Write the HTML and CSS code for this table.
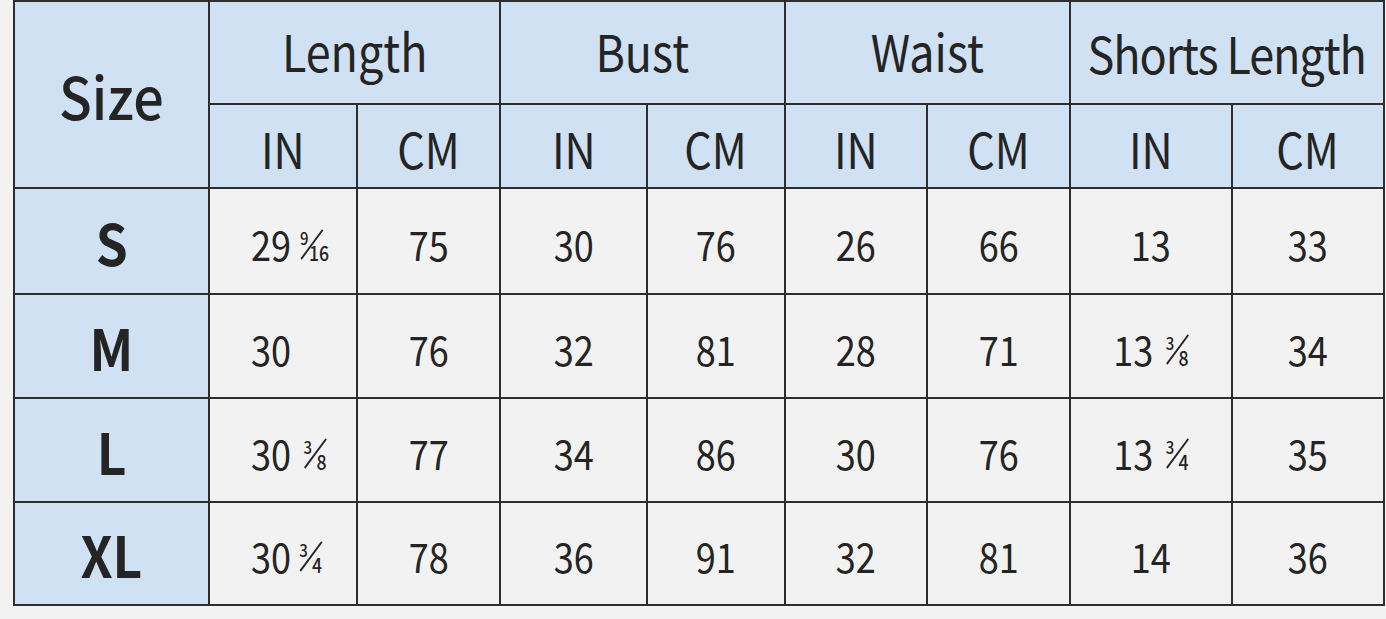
FILE: index.html
```html
<!DOCTYPE html>
<html>
<head>
<meta charset="utf-8">
<link rel="stylesheet" href="styles.css">
</head>
<body>
<table class="chart">
  <colgroup>
    <col class="c-size"><col class="c1"><col class="c2"><col class="c3"><col class="c4"><col class="c5"><col class="c6"><col class="c7"><col class="c8">
  </colgroup>
  <thead>
    <tr class="h1">
      <th rowspan="2" class="size-h"><span class="t">Size</span></th>
      <th colspan="2"><span class="t">Length</span></th>
      <th colspan="2"><span class="t">Bust</span></th>
      <th colspan="2"><span class="t">Waist</span></th>
      <th colspan="2" class="shorts"><span class="t">Shorts Length</span></th>
    </tr>
    <tr class="h2">
      <th><span class="t">IN</span></th><th><span class="t">CM</span></th>
      <th><span class="t">IN</span></th><th><span class="t">CM</span></th>
      <th><span class="t">IN</span></th><th><span class="t">CM</span></th>
      <th><span class="t">IN</span></th><th><span class="t">CM</span></th>
    </tr>
  </thead>
  <tbody>
    <tr class="r1">
      <th class="sz"><span class="t">S</span></th>
      <td class="left"><span class="t">29 <span class="frac wide"><span class="n">9</span><span class="s"></span><span class="d">16</span></span></span></td>
      <td><span class="t">75</span></td><td><span class="t">30</span></td><td><span class="t">76</span></td>
      <td><span class="t">26</span></td><td><span class="t">66</span></td><td><span class="t">13</span></td><td><span class="t">33</span></td>
    </tr>
    <tr class="r2">
      <th class="sz"><span class="t">M</span></th>
      <td class="left"><span class="t">30</span></td>
      <td><span class="t">76</span></td><td><span class="t">32</span></td><td><span class="t">81</span></td>
      <td><span class="t">28</span></td><td><span class="t">71</span></td>
      <td><span class="t">13 <span class="frac"><span class="n">3</span><span class="s"></span><span class="d">8</span></span></span></td>
      <td><span class="t">34</span></td>
    </tr>
    <tr class="r3">
      <th class="sz"><span class="t">L</span></th>
      <td class="left"><span class="t">30 <span class="frac"><span class="n">3</span><span class="s"></span><span class="d">8</span></span></span></td>
      <td><span class="t">77</span></td><td><span class="t">34</span></td><td><span class="t">86</span></td>
      <td><span class="t">30</span></td><td><span class="t">76</span></td>
      <td><span class="t">13 <span class="frac"><span class="n">3</span><span class="s"></span><span class="d">4</span></span></span></td>
      <td><span class="t">35</span></td>
    </tr>
    <tr class="r4">
      <th class="sz"><span class="t">XL</span></th>
      <td class="left"><span class="t">30 <span class="frac tight"><span class="n">3</span><span class="s"></span><span class="d">4</span></span></span></td>
      <td><span class="t">78</span></td><td><span class="t">36</span></td><td><span class="t">91</span></td>
      <td><span class="t">32</span></td><td><span class="t">81</span></td><td><span class="t">14</span></td><td><span class="t">36</span></td>
    </tr>
  </tbody>
</table>
</body>
</html>
```
FILE: styles.css
```css
html, body {
  margin: 0;
  padding: 0;
  background: #f2f2f2;
}
body {
  padding: 0 0 0 13px;
  font-family: "Noto Sans CJK SC", "Noto Sans", sans-serif;
  color: #242424;
}
.chart {
  border-collapse: collapse;
  table-layout: fixed;
  width: 1370px;
  border: 2px solid #2e2e2e;
}
.c-size { width: 195px; }
.c1 { width: 148px; }
.c2 { width: 143px; }
.c3 { width: 147px; }
.c4 { width: 138px; }
.c5 { width: 142px; }
.c6 { width: 143px; }
.c7 { width: 162px; }
.c8 { width: 152px; }
.chart th, .chart td {
  border: 2px solid #2e2e2e;
  padding: 0;
  text-align: center;
  vertical-align: middle;
  line-height: 1;
  white-space: nowrap;
}
.t {
  display: inline-block;
  transform: scaleX(0.88);
}
.chart thead th {
  background: #cfe1f2;
  font-weight: 400;
}
.h1 { height: 103px; }
.h1 th { font-size: 51px; padding-bottom: 4px; }
.h1 th.shorts { font-size: 50px; letter-spacing: -1.2px; padding-bottom: 2px; }
.h1 th.shorts .t { transform: scaleX(0.9); }
.h1 th.size-h { font-size: 58px; font-weight: 500; padding: 0; }
.h1 th.size-h .t { transform: scaleX(0.93); }
.h2 { height: 84px; }
.h2 th { font-size: 49px; padding-top: 2px; }
tbody tr { height: 104px; }
tbody .r1 { height: 106px; }
tbody .r4 { height: 103px; }
.chart td {
  background: #f2f2f2;
  font-size: 41px;
  padding-top: 4px;
}
.chart td.left {
  text-align: left;
  padding-left: 41px;
}
.chart td.left .t { transform-origin: left center; }
.chart th.sz {
  background: #cfe1f2;
  font-size: 57px;
  font-weight: 700;
  padding-top: 0;
}
.chart th.sz .t { transform: scaleX(0.9); }

.frac {
  display: inline-block;
  position: relative;
  width: 26px;
  height: 30px;
  margin-left: 5px;
  vertical-align: baseline;
}
.frac.wide { width: 33px; margin-left: 1px; }
.frac.tight { margin-left: 0; }
.frac .n {
  position: absolute;
  left: 0;
  top: -2px;
  font-size: 17px;
  font-weight: 500;
  line-height: 1;
}
.frac .d {
  position: absolute;
  right: 0;
  bottom: -2px;
  font-size: 20px;
  font-weight: 500;
  line-height: 1;
}
.frac .s {
  position: absolute;
  left: 1px;
  bottom: 1px;
  width: 38px;
  height: 0;
  border-top: 2px solid #242424;
  transform-origin: left center;
  transform: rotate(-50deg);
}
```
